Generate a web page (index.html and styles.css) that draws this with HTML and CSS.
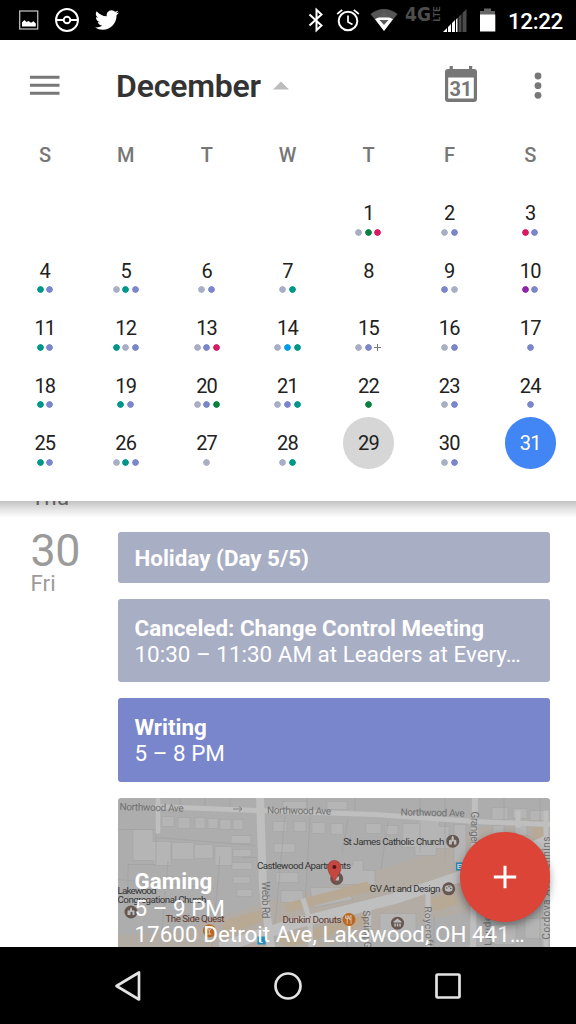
FILE: index.html
```html
<!DOCTYPE html>
<html lang="en">
<head>
<meta charset="utf-8">
<title>Calendar</title>
<link rel="stylesheet" href="styles.css">
</head>
<body>
<div class="phone">
  <header class="status">
    <div class="notifications">
      <svg width="20" height="40" viewBox="19 0 20 40"><rect x="19.7" y="11" width="18" height="18" fill="none" stroke="#bbb" stroke-width="1.3"/><path d="M22 26.5v-4.200l2.500-2.400 2 2 2-.8 2.500 1.700 2.500-1.500 2.300 2.200v3z" fill="#fff"/></svg>
      <svg width="24" height="40" viewBox="55 0 24 40" fill="none" stroke="#fff"><circle cx="67" cy="20" r="11" stroke-width="1.900"/><circle cx="67" cy="20" r="3.300" stroke-width="1.900"/><path d="M56 20h7.500M70.500 20H78" stroke-width="1.900"/></svg>
      <svg width="24" height="24" viewBox="0 0 24 24" fill="#fff"><path d="M23.950 4.570a10 10 0 0 1-2.820.77 4.960 4.960 0 0 0 2.160-2.720c-.95.55-2 .95-3.130 1.180a4.920 4.920 0 0 0-8.380 4.480C7.690 8.090 4.070 6.130 1.640 3.160a4.930 4.930 0 0 0 1.520 6.570 4.900 4.900 0 0 1-2.230-.61v.06c0 2.380 1.700 4.370 3.950 4.820a5 5 0 0 1-2.210.09 4.940 4.940 0 0 0 4.600 3.420A9.870 9.870 0 0 1 0 19.540a14 14 0 0 0 7.550 2.210c9.050 0 14-7.500 14-13.990 0-.21 0-.42-.02-.63a9.900 9.900 0 0 0 2.420-2.560z"/></svg>
    </div>
    <div class="system">
      <svg width="16" height="40" viewBox="308 0 16 40"><path d="M309.500 14.500l12 11-5 4.700V9.800l5 4.700-12 11" fill="none" stroke="#fff" stroke-width="2"/></svg>
      <svg width="24" height="40" viewBox="336 0 24 40" fill="none" stroke="#fff" stroke-width="2"><circle cx="348" cy="21" r="9.300"/><path d="M348 15.500V22l4.500 2.500M337.200 14l5-4.200M358.800 14l-5-4.200" stroke-width="1.700"/></svg>
      <svg width="28" height="40" viewBox="370 0 28 40"><path d="M370.500 14q13.500-10 27 0l-13.500 17z" fill="#555"/><path d="M375 19q9-5 18 0L384 31z" fill="#fff"/><path d="M379.500 17.500l4.500-6 4.500 6zM379.500 20h9l-4.500 5z" fill="#5c5c5c"/></svg>
      <svg class="network" width="36" height="40" viewBox="405 0 36 40"><text class="net-main" x="405" y="21" textLength="26" lengthAdjust="spacingAndGlyphs">4G</text><text class="net-sub" transform="translate(440.300 21.500) rotate(-90)" textLength="15" lengthAdjust="spacingAndGlyphs">LTE</text></svg>
      <svg width="25" height="40" viewBox="443 0 25 40"><path d="M443 32l4-4v4zM448 32v-5l3-3v8zM452 32v-9l3-3v12zM456 32V19.500l1.500-1.500v14z" fill="#fff"/><path d="M458.500 32V17l3-3v18zM462.500 32V13l4-4v23z" fill="#4b4b4b"/></svg>
      <svg width="16" height="40" viewBox="480 0 16 40"><path d="M484 8.500h7V11h4v4h-15v-4h4z" fill="#666"/><path d="M480 14.500h15.300v17H480z" fill="#fff"/></svg>
      <span class="clock">12:22</span>
    </div>
  </header>

  <section class="panel">
    <div class="toolbar">
      <svg class="menu-icon" width="30" height="22" viewBox="0 0 30 22"><path d="M0 2.200h29.500M0 10.200h29.500M0 18.200h29.500" stroke="#777" stroke-width="3"/></svg>
      <h1 class="month">December</h1>
      <svg class="caret" width="16" height="9" viewBox="0 0 16 9"><path d="M0 8.500L8 .5l8 8z" fill="#bcbcbc"/></svg>
      <svg class="today-icon" width="34" height="38" viewBox="0 0 34 38"><path d="M4 4h26q3 0 3 3v27q0 3-3 3H4q-3 0-3-3V7q0-3 3-3zM4.200 12.500V33.500h25.600v-21z" fill="#777" fill-rule="evenodd"/><path d="M7.200 1v5M26.600 1v5" stroke="#777" stroke-width="3.200"/><text class="today-num" x="16.700" y="30.500">31</text></svg>
      <svg class="more-icon" width="8" height="28" viewBox="0 0 8 28" fill="#777"><circle cx="4" cy="4" r="3.400"/><circle cx="4" cy="13.700" r="3.400"/><circle cx="4" cy="23.300" r="3.400"/></svg>
    </div>
    <div class="weekdays"><span>S</span><span>M</span><span>T</span><span>W</span><span>T</span><span>F</span><span>S</span></div>
    <div class="days">
      <div class="day first"><b>1</b><p><i class="grey"></i><i class="green"></i><i class="pink"></i></p></div>
      <div class="day"><b>2</b><p><i class="grey"></i><i class="blue"></i></p></div>
      <div class="day"><b>3</b><p><i class="pink"></i><i class="blue"></i></p></div>
      <div class="day"><b>4</b><p><i class="teal"></i><i class="blue"></i></p></div>
      <div class="day"><b>5</b><p><i class="grey"></i><i class="teal"></i><i class="blue"></i></p></div>
      <div class="day"><b>6</b><p><i class="grey"></i><i class="blue"></i></p></div>
      <div class="day"><b>7</b><p><i class="grey"></i><i class="teal"></i></p></div>
      <div class="day"><b>8</b></div>
      <div class="day"><b>9</b><p><i class="blue"></i><i class="grey"></i></p></div>
      <div class="day"><b>10</b><p><i class="purple"></i><i class="blue"></i></p></div>
      <div class="day"><b>11</b><p><i class="teal"></i><i class="blue"></i></p></div>
      <div class="day"><b>12</b><p><i class="teal"></i><i class="grey"></i><i class="blue"></i></p></div>
      <div class="day"><b>13</b><p><i class="grey"></i><i class="blue"></i><i class="pink"></i></p></div>
      <div class="day"><b>14</b><p><i class="grey"></i><i class="sky"></i><i class="teal"></i></p></div>
      <div class="day"><b>15</b><p><i class="grey"></i><i class="blue"></i><i class="plus"></i></p></div>
      <div class="day"><b>16</b><p><i class="grey"></i><i class="blue"></i></p></div>
      <div class="day"><b>17</b><p><i class="blue"></i></p></div>
      <div class="day"><b>18</b><p><i class="teal"></i><i class="blue"></i></p></div>
      <div class="day"><b>19</b><p><i class="teal"></i><i class="blue"></i></p></div>
      <div class="day"><b>20</b><p><i class="grey"></i><i class="blue"></i><i class="green"></i></p></div>
      <div class="day"><b>21</b><p><i class="grey"></i><i class="blue"></i><i class="teal"></i></p></div>
      <div class="day"><b>22</b><p><i class="green"></i></p></div>
      <div class="day"><b>23</b><p><i class="grey"></i><i class="blue"></i></p></div>
      <div class="day"><b>24</b><p><i class="blue"></i></p></div>
      <div class="day"><b>25</b><p><i class="teal"></i><i class="blue"></i></p></div>
      <div class="day"><b>26</b><p><i class="grey"></i><i class="teal"></i><i class="blue"></i></p></div>
      <div class="day"><b>27</b><p><i class="grey"></i></p></div>
      <div class="day"><b>28</b><p><i class="grey"></i><i class="teal"></i></p></div>
      <div class="day marked today"><b>29</b></div>
      <div class="day"><b>30</b><p><i class="grey"></i><i class="blue"></i></p></div>
      <div class="day marked selected"><b>31</b></div>
    </div>
  </section>

  <main class="agenda">
    <div class="previous">Thu</div>
    <div class="agenda-day">
      <div class="date"><span class="num">30</span><span class="name">Fri</span></div>
      <div class="events">
        <article class="event single"><h2>Holiday (Day 5/5)</h2></article>
        <article class="event"><h2>Canceled: Change Control Meeting</h2><p>10:30 – 11:30 AM at Leaders at Every…</p></article>
        <article class="event writing"><h2>Writing</h2><p>5 – 8 PM</p></article>
        <article class="event gaming">
          <svg class="map" width="432" height="150" viewBox="118 797.500 432 150">
            <rect x="118" y="797" width="432" height="151" fill="#adadad"/>
            <path d="M118 948v-13l60-4 80-27 90-24 70-23 60-30 72-12v75l-70 18-70 16-90 23z" fill="#b3aca4"/>
            <g fill="#b5b5b5" stroke="#a4a4a4" stroke-width=".6">
              <path d="M133 829h20v12h18v24h-17v-5h-21zM172 842h22v17h-22zM194 844h19v14h-19zM215 846h17v19h-17zM162 816h12v10h-12zM178 817h12v11h-12zM195 817h10v11h-10zM208 818h10v10h-10zM220 819h11v10h-11zM233 819h10v10h-10z"/>
              <path d="M231 835h20v8h-20zM233 849h18v7h-18zM232 862h20v7h-20zM233 876h17v7h-17zM237 889h15v7h-15zM273 821h14v10h-14zM294 821h12v10h-12zM312 822h13v11h-13zM331 823h12v11h-12zM274 843h21v9h-21zM276 872h22v10h-22zM281 890h22v12h-22z"/>
              <path d="M403 823h15v-7h21v10h10v22h-13v7h-21v-8h-13zM366 823h15v10h-15zM385 825h13v9h-13zM454 824h12v38h-12zM492 807h16v12h-16zM513 808h14v10h-14zM530 810h15v10h-15zM493 825h12v11h-12zM515 825h12v10h-12zM340 865h13v-5h10v10h12v14h-35zM310 887h35l8 12-40 8zM380 913h36v24h-36zM283 801h24v7h-24zM327 801h20v8h-20zM494 924h22v20h-22zM525 918h20v20h-20z"/>
            </g>
            <g fill="none" stroke="#a0a0a0" stroke-width=".7">
              <path d="M118 829h38v35h-28v40M157 837l98 8M220 855l-8 92M242 857h15M285 816l-12 130M310 817l-5 90M348 819l-6 32M388 821l-7 48M420 797v55M445 797v65M118 879l96 9M168 860l-7 80M307 797v17M355 797v19M540 797v150M504 797v35M434 916v30M347 906v40M180 797v12M205 797v12M230 797v12"/>
            </g>
            <path d="M224 920l36-10 4 10-42 17zM285 903l82-22 6 9-85 22zM430 898l24-7 4 12-23 8zM533 827h12v15h-12zM277 938l90-24 2 9-80 24z" fill="#b8a995"/>
            <g fill="none" stroke="#bfbfbf">
              <path d="M158 797v36" stroke-width="4.500"/><path d="M155 806l102 4 118 4 100 7 75 3" stroke-width="5"/>
              <path d="M260 797l3 90 8 60" stroke-width="8"/><path d="M475 797l-2 150" stroke-width="6"/>
              <path d="M220 947l75-24 100-25 80-27 75-32" stroke-width="11"/>
              <path d="M303 898l7 23 1 26M369 907l-1 40M428 890v57M546 810v137M518 810v17" stroke-width="5"/>
            </g>
            <g class="road">
              <text transform="translate(119.500 809.500) rotate(1.500)" textLength="64">Northwood Ave</text>
              <text transform="translate(267 813) rotate(1)" textLength="64">Northwood Ave</text>
              <text transform="translate(400.500 815) rotate(1)" textLength="64">Northwood Ave</text>
              <text transform="translate(262 881) rotate(90)" textLength="37">Webb Rd</text>
              <text transform="translate(470.500 811) rotate(90)" textLength="33">Granger</text>
              <text transform="translate(363 910) rotate(88)" textLength="38">Spring G</text>
              <text transform="translate(424.500 906) rotate(88)" textLength="40">Roycroft</text>
              <text transform="translate(491.500 945) rotate(-92)" textLength="40">Lauderd</text>
              <text transform="translate(549.500 939) rotate(-90)" textLength="103">Cordova Ave Pennins</text>
            </g>
            <path d="M233 808.500h9m-3-2.500l3 2.500-3 2.500" fill="none" stroke="#858585"/>
            <g class="place">
              <text x="343.300" y="844" textLength="101">St James Catholic Church</text>
              <text x="257" y="868" textLength="94">Castlewood Apartments</text>
              <text x="369.500" y="891.500" textLength="71">GV Art and Design</text>
              <text x="117.500" y="893" textLength="39">Lakewood</text>
              <text x="117.500" y="902" textLength="89">Congregational Church</text>
              <g class="shop"><text x="165.500" y="921.500" textLength="59">The Side Quest</text><text x="282.500" y="922" textLength="59">Dunkin' Donuts</text></g>
            </g>
            <g fill="#665750"><circle cx="452.700" cy="840.700" r="6.500"/><circle cx="448.700" cy="888.300" r="6.500"/><circle cx="131" cy="911.500" r="6.500"/><circle cx="397.500" cy="922.700" r="6.500"/><circle cx="336.700" cy="878" r="6.500"/></g>
            <g fill="#bbb"><path d="M449 844v-4l1.500-1 1 1v-3l1.200-2 1.200 2v3l1-1 1.500 1v4h-2.500v-3h-2v3zM127.500 914.500v-4l1.500-1 1 1v-2l1-2 1 2v2l1-1 1.500 1v4h-2v-3h-2v3zM393.500 921l4-3 4 3v1h-8zM394.300 923h1.500v3h-1.500zm2.500 0h1.500v3h-1.500zm2.500 0h1.500v3h-1.500zM335 876h4v4h-4z"/><ellipse cx="448.700" cy="888" rx="3.900" ry="3.300"/></g>
            <g fill="#665750"><circle cx="446.800" cy="887.500" r=".8"/><circle cx="449" cy="886.300" r=".8"/><circle cx="450.800" cy="888" r=".8"/></g>
            <g fill="#bb671e"><circle cx="209.300" cy="930.300" r="6.500"/><circle cx="349" cy="919" r="6.500"/></g>
            <path d="M347.200 914.800v8.500M345.700 915v3h3v-3M351 923.300v-8.500q-1.500 1-1.500 4h1.500M206.800 927.500h5l-2.500 2.700zM209.300 929v4.500m-2 0h4" fill="none" stroke="#d5c3b5"/>
            <g fill="#258dbe"><rect x="257.500" y="936" width="8" height="8"/><rect x="456" y="862" width="8" height="8"/></g>
            <path d="M260 938v4h3M458 864h4v4h-4zM458 866h4" fill="none" stroke="#c5dce8" stroke-width="1.200"/>
            <path d="M334.300 883c-.6-6-6.500-9-6.500-16.500a6.600 6.600 0 0 1 13.200 0c0 7.500-6.100 10.500-6.700 16.500z" fill="#c54741" stroke="#923731" stroke-width=".6"/><circle cx="334.400" cy="866.500" r="2" fill="#591411"/>
          </svg>
          <div class="event-text"><h2>Gaming</h2><p>5 – 9 PM</p><p>17600 Detroit Ave, Lakewood, OH 441…</p></div>
        </article>
      </div>
    </div>
    <button class="fab" aria-label="Add event"><svg width="24" height="24" viewBox="0 0 24 24"><path d="M12 .8v22.400M.8 12h22.400" stroke="#fff" stroke-width="3"/></svg></button>
  </main>

  <nav class="navbar">
    <svg width="28" height="32" viewBox="0 0 28 32"><path d="M2.500 16L25 2.500v27z" fill="none" stroke="#e3e3e3" stroke-width="2.700" stroke-linejoin="round"/></svg>
    <svg width="28" height="28" viewBox="0 0 28 28"><circle cx="14" cy="14" r="12.500" fill="none" stroke="#e3e3e3" stroke-width="2.700"/></svg>
    <svg width="28" height="28" viewBox="0 0 28 28"><rect x="2.500" y="2.500" width="23" height="23" rx="1" fill="none" stroke="#e3e3e3" stroke-width="2.700"/></svg>
  </nav>
</div>
</body>
</html>
```
FILE: styles.css
```css
* { box-sizing: border-box; margin: 0; padding: 0; }
body { background: #fff; font-family: Roboto, "Liberation Sans", sans-serif; }
svg { display: block; flex: none; }
.phone { width: 576px; height: 1024px; display: flex; flex-direction: column; overflow: hidden; }

.status { height: 40px; flex: none; background: #000; display: flex; justify-content: space-between; padding: 0 13px 0 19px; }
.notifications { display: flex; align-items: center; gap: 16px; }
.system { display: flex; align-items: center; }
.system svg { margin-right: 12px; }
.system svg:nth-child(3) { margin-left: -2px; margin-right: 7px; }
.system .network { margin-right: 2px; }
.clock { color: #fff; font-size: 22.4px; font-weight: 500; line-height: 40px; padding-top: 1px; width: 55px; letter-spacing: -.4px; white-space: nowrap; }
.net-main { font-family: "DejaVu Sans", sans-serif; font-size: 19px; font-weight: 700; fill: #4d4d4d; }
.net-sub { font-size: 9.500px; font-weight: 700; fill: #4d4d4d; }

.panel { position: relative; z-index: 2; height: 461px; flex: none; background: #fff; }
.panel::after { content: ""; position: absolute; left: 0; right: 0; top: 100%; height: 17px; background: linear-gradient(rgba(0,0,0,.24), rgba(0,0,0,.1) 50%, transparent); }
.toolbar { height: 90px; display: flex; align-items: center; padding: 0 34px 0 30px; }
.menu-icon { margin-top: 1px; }
.month { margin-left: 56px; width: 146px; color: #333; font-size: 32px; font-weight: 600; letter-spacing: -.2px; line-height: 40px; padding-top: 1px; }
.caret { margin-left: 11px; }
.today-icon { margin-left: 155px; margin-top: -3px; }
.today-num { font-size: 20px; font-weight: 700; letter-spacing: -.4px; fill: #777; text-anchor: middle; }
.more-icon { margin-left: auto; margin-top: 1px; }
.weekdays { height: 54px; display: grid; grid-template-columns: repeat(7, 80.900px); padding: 13px 0 0 4.500px; text-align: center; color: #777; font-size: 20px; font-weight: 500; line-height: 24px; }
.days { display: grid; grid-template-columns: repeat(7, 80.900px); grid-auto-rows: 57.600px; padding-left: 4.400px; }
.day { padding-top: 18px; text-align: center; color: #212121; }
.day.first { grid-column: 5; }
.day b { display: block; font-size: 20px; font-weight: 400; line-height: 23px; letter-spacing: -.8px; }
.day p { display: flex; justify-content: center; gap: 2.600px; margin-top: 3.500px; }
.day i { width: 7px; height: 7px; background: radial-gradient(circle, currentColor 2.900px, transparent 3.700px); }
.grey { color: #a8aec4; }
.blue { color: #7986cb; }
.teal { color: #009688; }
.green { color: #0b8043; }
.pink { color: #d81b60; }
.purple { color: #8e24aa; }
.sky { color: #039be5; }
.day .plus { background: linear-gradient(#777, #777) center / 100% 1px no-repeat, linear-gradient(#777, #777) center / 1px 100% no-repeat; }
.marked { width: 51.200px; height: 51.200px; margin: 3px auto 0; padding-top: 15px; border-radius: 50%; }
.today { background: #d6d6d6; }
.selected { background: #4285f4; color: #fff; }

.agenda { position: relative; height: 446px; flex: none; overflow: hidden; }
.previous { display: flow-root; height: 31px; padding-left: 31px; font-size: 22.400px; line-height: 26px; color: #777; }
.previous::before { content: ""; display: block; margin-top: -17px; }
.agenda-day { display: flex; }
.date { width: 118px; padding-left: 30.500px; color: #9b9b9b; display: flex; flex-direction: column; }
.num { font-size: 44.800px; line-height: 38px; letter-spacing: -.5px; }
.name { font-size: 22.400px; line-height: 26px; }
.events { width: 432px; display: flex; flex-direction: column; gap: 16px; }
.event { height: 83.200px; flex: none; padding: 15.600px 16.500px; background: #a8aec4; border-radius: 3px; color: #fff; font-size: 22.400px; line-height: 26.400px; white-space: nowrap; }
.event h2 { font-size: 22.400px; font-weight: 700; }
.event p { letter-spacing: .03px; }
.event.single { height: 51.200px; padding-top: 13px; }
.writing { background: #7986cb; }
.gaming { height: 160px; padding: 0; display: grid; background: none; overflow: hidden; }
.gaming > * { grid-area: 1 / 1; }
.event-text { position: relative; padding: 70.700px 0 0 16.500px; }
.road text { font-size: 10px; fill: #707070; }
.place text { font-size: 9.800px; fill: #353535; }
.place .shop text { fill: #61382b; }
.fab { position: absolute; right: 26px; top: 330.500px; width: 90px; height: 90px; border: 0; border-radius: 50%; background: #db4437; display: grid; place-items: center; box-shadow: 0 4px 9px rgba(0,0,0,.38); }
.navbar { flex: 1; background: #000; display: flex; align-items: center; justify-content: space-between; padding: 0 114px; }
```
